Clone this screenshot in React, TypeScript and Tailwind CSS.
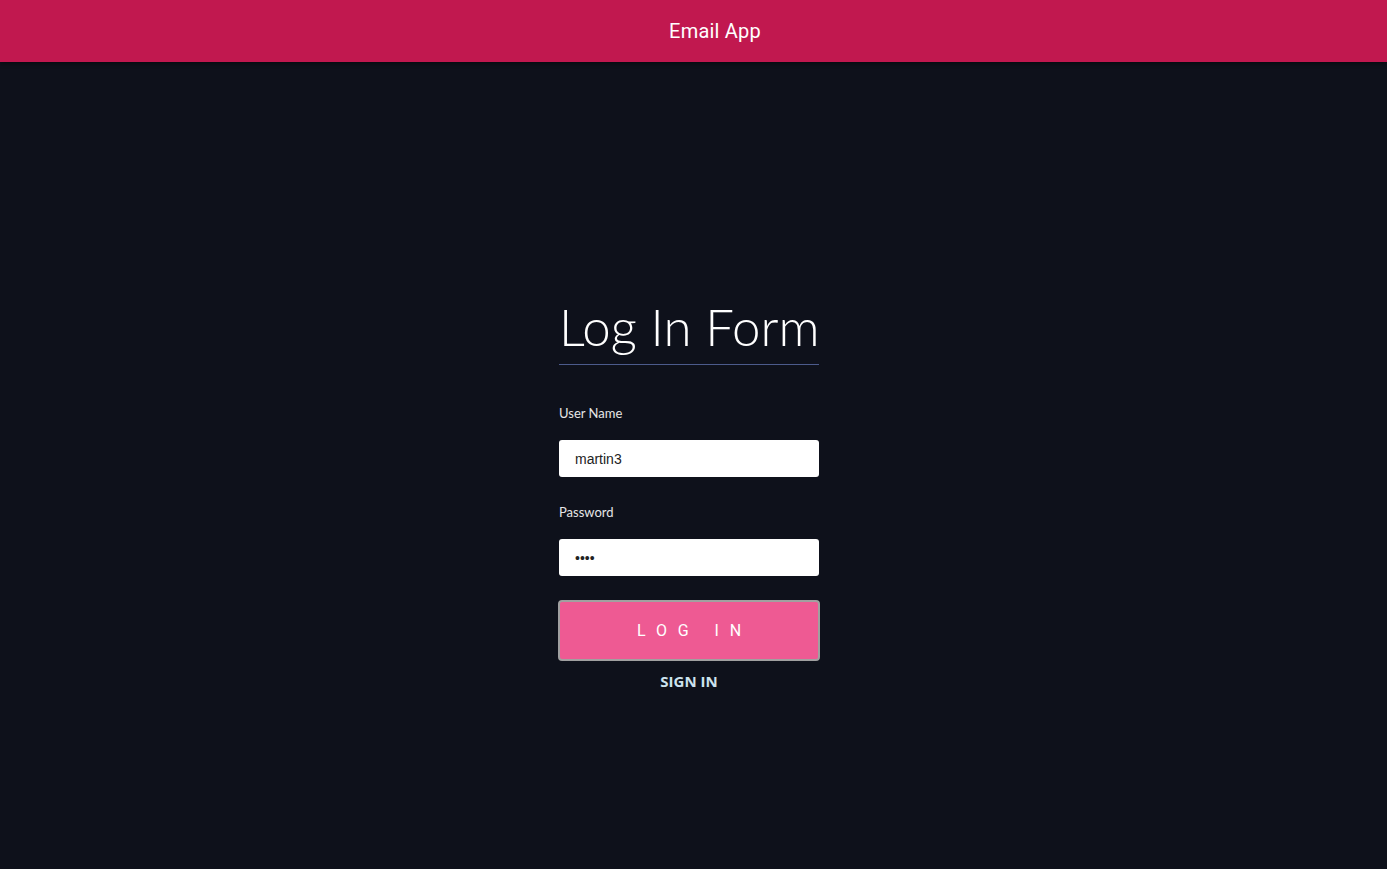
export default function App() {
  return (
    <div className="min-h-screen bg-[#0e111b] flex flex-col">
      <header className="h-[62px] bg-[#c1184f] shadow-[0_2px_4px_rgba(0,0,0,0.4)] flex items-center justify-center pl-[43px]">
        <h1 className="text-[20px] text-white font-['Roboto',sans-serif] tracking-[0.01em]">
          Email App
        </h1>
      </header>

      <main className="flex-1 flex justify-center pt-[239px] pr-[9px]">
        <form className="w-[260px] flex flex-col font-['Lato',sans-serif]">
          <h2 className="text-[51px] font-light text-white leading-[1] pb-[12px] border-b border-[#4c5b8c] whitespace-nowrap">
            Log In Form
          </h2>

          <label className="mt-[40px] text-[13px] text-[#e6e6e6] leading-[16px]">
            User Name
          </label>
          <input
            className="mt-[19px] h-[37px] bg-white rounded-[3px] px-[16px] text-[14px] text-[#222] font-['Liberation_Sans',sans-serif] outline-none"
            defaultValue="martin3"
          />

          <label className="mt-[27px] text-[13px] text-[#e6e6e6] leading-[16px]">
            Password
          </label>
          <input
            type="password"
            className="mt-[19px] h-[37px] bg-white rounded-[3px] px-[16px] text-[14px] text-[#222] font-['Liberation_Sans',sans-serif] outline-none"
            defaultValue="1234"
          />

          <button
            type="button"
            className="mt-[24px] -mx-[1px] h-[61px] rounded-[4px] border-2 border-[#a0a0a0] bg-[#ee5a93] text-white text-[16px] tracking-[0.68em] pl-[0.68em] font-['Roboto',sans-serif]"
          >
            LOG IN
          </button>

          <button
            type="button"
            className="mt-[9px] self-center text-[15px] font-bold text-[#cde3ee] font-['Open_Sans',sans-serif]"
          >
            SIGN IN
          </button>
        </form>
      </main>
    </div>
  );
}
